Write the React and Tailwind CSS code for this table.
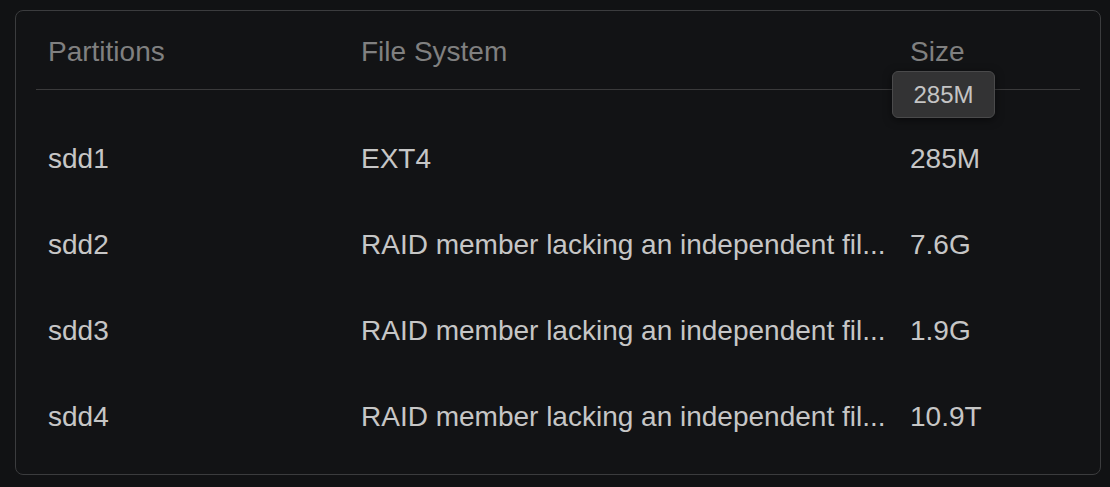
import React from "react";

const rows = [
  { name: "sdd1", fs: "EXT4", size: "285M" },
  { name: "sdd2", fs: "RAID member lacking an independent fil...", size: "7.6G" },
  { name: "sdd3", fs: "RAID member lacking an independent fil...", size: "1.9G" },
  { name: "sdd4", fs: "RAID member lacking an independent fil...", size: "10.9T" },
];

const cols = "grid grid-cols-[313px_549px_182px]";

export default function App() {
  return (
    <div
      className="h-[487px] w-full bg-[#111214] pl-[15px] pt-[10px]"
      style={{ fontFamily: '"Liberation Sans", Arial, sans-serif' }}
    >
      <div className="w-[1086px] h-[465px] rounded-lg border border-[#3b3c3e] bg-[#121315] px-[20px]">
        {/* header */}
        <div className="relative">
          <div className={`${cols} pt-[23px] pb-[19px] border-b border-[#3a3a3b] text-[28px] leading-[36px] text-[#808080]`}>
            <div className="px-3">Partitions</div>
            <div className="px-3">File System</div>
            <div className="px-3">Size</div>
          </div>
          {/* tooltip over the divider */}
          <div className="absolute left-[856px] top-[60px] h-[47px] w-[103px] flex items-center justify-center rounded-md border border-[#4a4a4b] bg-[#333334] text-[24px] text-[#c4c4c4] shadow-[0_2px_8px_rgba(0,0,0,0.5)]">
            285M
          </div>
        </div>

        {/* body */}
        <div className="pt-[26px]">
          {rows.map((r) => (
            <div
              key={r.name}
              className={`${cols} h-[86px] items-center text-[28px] leading-[36px] text-[#c6c6c6]`}
            >
              <div className="px-3">{r.name}</div>
              <div className="px-3 truncate">{r.fs}</div>
              <div className="px-3">{r.size}</div>
            </div>
          ))}
        </div>
      </div>
    </div>
  );
}
